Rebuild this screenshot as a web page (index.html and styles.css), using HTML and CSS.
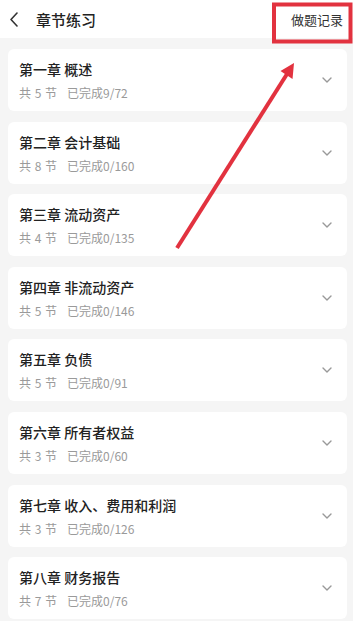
FILE: index.html
```html
<!DOCTYPE html>
<html lang="zh-CN">

<head>
    <meta charset="UTF-8">
    <meta name="viewport" content="width=device-width, initial-scale=1.0">
    <title>章节练习</title>
    <link rel="stylesheet" href="styles.css">
</head>

<body>
    <div class="header">
        <div class="header_left">
            <svg class="back" width="10" height="15" viewBox="0 0 10 15">
                <path d="M8 1 L2 7.5 L8 14" fill="none" stroke="#333" stroke-width="1.6" stroke-linecap="round" stroke-linejoin="round"/>
            </svg>
            <span class="page_title">章节练习</span>
        </div>
        <span class="record">做题记录</span>
    </div>

    <div class="list">
        <div class="card">
            <div class="info">
                <div class="chapter">第一章 概述</div>
                <div class="meta"><span>共 5 节</span><span>已完成9/72</span></div>
            </div>
            <svg class="arrow_down" width="10" height="6" viewBox="0 0 10 6"><path d="M1 1 L5 5 L9 1" fill="none" stroke="#999" stroke-width="1.4" stroke-linecap="round" stroke-linejoin="round"/></svg>
        </div>
        <div class="card">
            <div class="info">
                <div class="chapter">第二章 会计基础</div>
                <div class="meta"><span>共 8 节</span><span>已完成0/160</span></div>
            </div>
            <svg class="arrow_down" width="10" height="6" viewBox="0 0 10 6"><path d="M1 1 L5 5 L9 1" fill="none" stroke="#999" stroke-width="1.4" stroke-linecap="round" stroke-linejoin="round"/></svg>
        </div>
        <div class="card">
            <div class="info">
                <div class="chapter">第三章 流动资产</div>
                <div class="meta"><span>共 4 节</span><span>已完成0/135</span></div>
            </div>
            <svg class="arrow_down" width="10" height="6" viewBox="0 0 10 6"><path d="M1 1 L5 5 L9 1" fill="none" stroke="#999" stroke-width="1.4" stroke-linecap="round" stroke-linejoin="round"/></svg>
        </div>
        <div class="card">
            <div class="info">
                <div class="chapter">第四章 非流动资产</div>
                <div class="meta"><span>共 5 节</span><span>已完成0/146</span></div>
            </div>
            <svg class="arrow_down" width="10" height="6" viewBox="0 0 10 6"><path d="M1 1 L5 5 L9 1" fill="none" stroke="#999" stroke-width="1.4" stroke-linecap="round" stroke-linejoin="round"/></svg>
        </div>
        <div class="card">
            <div class="info">
                <div class="chapter">第五章 负债</div>
                <div class="meta"><span>共 5 节</span><span>已完成0/91</span></div>
            </div>
            <svg class="arrow_down" width="10" height="6" viewBox="0 0 10 6"><path d="M1 1 L5 5 L9 1" fill="none" stroke="#999" stroke-width="1.4" stroke-linecap="round" stroke-linejoin="round"/></svg>
        </div>
        <div class="card">
            <div class="info">
                <div class="chapter">第六章 所有者权益</div>
                <div class="meta"><span>共 3 节</span><span>已完成0/60</span></div>
            </div>
            <svg class="arrow_down" width="10" height="6" viewBox="0 0 10 6"><path d="M1 1 L5 5 L9 1" fill="none" stroke="#999" stroke-width="1.4" stroke-linecap="round" stroke-linejoin="round"/></svg>
        </div>
        <div class="card">
            <div class="info">
                <div class="chapter">第七章 收入、费用和利润</div>
                <div class="meta"><span>共 3 节</span><span>已完成0/126</span></div>
            </div>
            <svg class="arrow_down" width="10" height="6" viewBox="0 0 10 6"><path d="M1 1 L5 5 L9 1" fill="none" stroke="#999" stroke-width="1.4" stroke-linecap="round" stroke-linejoin="round"/></svg>
        </div>
        <div class="card">
            <div class="info">
                <div class="chapter">第八章 财务报告</div>
                <div class="meta"><span>共 7 节</span><span>已完成0/76</span></div>
            </div>
            <svg class="arrow_down" width="10" height="6" viewBox="0 0 10 6"><path d="M1 1 L5 5 L9 1" fill="none" stroke="#999" stroke-width="1.4" stroke-linecap="round" stroke-linejoin="round"/></svg>
        </div>
    </div>

    <!-- red annotation drawn over the screenshot -->
    <svg class="annotation" width="353" height="621" viewBox="0 0 353 621">
        <rect x="274" y="4.5" width="76.5" height="37" fill="none" stroke="#e2323f" stroke-width="4"/>
        <line x1="177" y1="248" x2="287" y2="74" stroke="#e2323f" stroke-width="4"/>
        <polygon points="294,63 292.5,79 280.5,71" fill="#e2323f"/>
    </svg>
</body>

</html>
```

FILE: styles.css
```css
body {
    margin: 0;
    width: 353px;
    height: 621px;
    overflow: hidden;
    background-color: #f5f5f5;
    font-family: "Noto Sans CJK SC", "Noto Sans", sans-serif;
    position: relative;
}

.header {
    height: 38px;
    background: #fff;
    display: flex;
    align-items: center;
    justify-content: space-between;
    padding: 0 10px 0 9px;
}

.header_left {
    display: flex;
    align-items: center;
    gap: 17px;
}

.back {
    display: block;
}

.page_title {
    font-size: 15px;
    font-weight: 500;
    color: #222;
}

.record {
    font-size: 13px;
    color: #333;
}

.list {
    padding: 11px 6px 0 8px;
    display: flex;
    flex-direction: column;
    gap: 10.6px;
}

.card {
    height: 62px;
    box-sizing: border-box;
    background: #fff;
    border-radius: 6px;
    padding: 10px 15px 10px 11px;
    display: flex;
    align-items: center;
    justify-content: space-between;
}

.chapter {
    font-size: 14px;
    line-height: 20px;
    font-weight: 500;
    color: #222;
    margin-bottom: 5px;
}

.meta {
    font-size: 12px;
    line-height: 17px;
    color: #9a9a9a;
    display: flex;
    gap: 10px;
    word-spacing: 1px;
}

.arrow_down {
    display: block;
}

.annotation {
    position: absolute;
    left: 0;
    top: 0;
    pointer-events: none;
}
```
